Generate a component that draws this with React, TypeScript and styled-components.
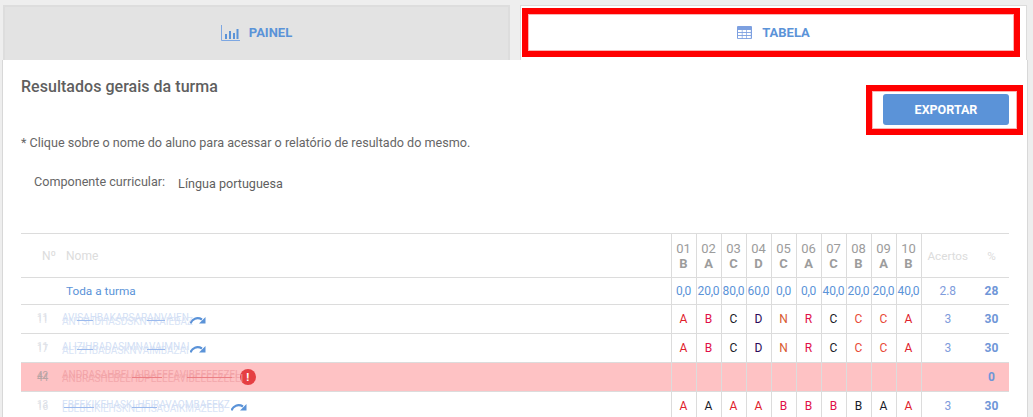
import React from "react";
import styled, { createGlobalStyle } from "styled-components";

const Global = createGlobalStyle`
  html, body { margin: 0; padding: 0; height: 100%; background: #eeeeee; overflow: hidden; }
  body { font-family: Roboto, "Liberation Sans", sans-serif; color: #666; }
  #root { height: 417px; overflow: hidden; }
`;

const BLUE = "#5b93d8";

const Page = styled.div`
  padding: 5px 0 0 2px;
  width: 1028px;
  box-sizing: border-box;
`;
const Tabs = styled.div`
  display: flex;
  gap: 10px;
  padding-left: 1px;
`;
const Tab = styled.div<{ $active?: boolean }>`
  position: relative;
  flex: 0 0 507px;
  height: 55px;
  box-sizing: border-box;
  display: flex;
  align-items: center;
  justify-content: center;
  gap: ${(p) => (p.$active ? "10px" : "9px")};
  padding-bottom: 2px;
  color: ${BLUE};
  font-size: 13px;
  font-weight: 700;
  background: ${(p) => (p.$active ? "#fff" : "#e3e3e3")};
  border: ${(p) => (p.$active ? "1px solid #dcdcdc" : "2px solid #dddddd")};
  border-bottom: none;
`;
const TabHighlight = styled.div`
  position: absolute;
  left: 1px;
  right: 6px;
  top: 2px;
  height: 49px;
  box-sizing: border-box;
  border: 6px solid #ff0000;
  box-shadow: inset 0 0 0 1px #f8b4b4;
`;
const Panel = styled.div`
  background: #fff;
  border-left: 1px solid #d8d8d8;
  border-right: 1px solid #d8d8d8;
  height: 360px;
  box-sizing: border-box;
  padding: 0 4px 0 18px;
  width: 1026px;
`;
const Head = styled.div`
  display: flex;
  justify-content: space-between;
  align-items: flex-start;
  height: 75px;
`;
const Title = styled.h1`
  margin: 18px 0 0;
  font-size: 16px;
  line-height: 18px;
  font-weight: 500;
  letter-spacing: 0.03px;
  color: #5f5f5f;
`;
const ExportFrame = styled.div`
  margin-top: 25px;
  width: 157px;
  height: 50px;
  box-sizing: border-box;
  border: 6px solid #ff0000;
  box-shadow: inset 0 0 0 1px #f8b4b4;
  display: flex;
  padding: 3px 8px 0 11px;
`;
const ExportButton = styled.button`
  width: 126px;
  height: 31px;
  border: none;
  border-radius: 3px;
  background: #5b93d8;
  color: #fff;
  font-family: inherit;
  font-size: 12.5px;
  font-weight: 700;
  padding: 0;
`;
const Note = styled.p`
  margin: 0;
  font-size: 12.6px;
  line-height: 16px;
  color: #666;
`;
const Filter = styled.div`
  display: flex;
  gap: 13px;
  padding: 23px 0 0 13px;
  height: 82px;
  box-sizing: border-box;
  font-size: 12.6px;
  line-height: 16px;
`;
const FilterValue = styled.span`
  padding-top: 2px;
  color: #5f5f5f;
`;
const Table = styled.table`
  width: 988px;
  table-layout: fixed;
  border-collapse: collapse;
  border-top: 1px solid #dcdcdc;
  font-size: 12px;
`;
const HeadRow = styled.tr`
  height: 44px;
  border-bottom: 1px solid #dcdcdc;
`;
const TotalRow = styled.tr`
  height: 27px;
  border-bottom: 1px solid #dcdcdc;
  color: ${BLUE};
`;
const Row = styled.tr<{ $alert?: boolean }>`
  height: 29px;
  border-bottom: 1px solid #dcdcdc;
  background: ${(p) => (p.$alert ? "#fec2c4" : "#fff")};
`;
const NoHead = styled.th`
  padding: 0 6px 0 0;
  text-align: right;
  font-weight: 400;
  color: #dcdcdc;
  font-size: 12px;
`;
const NameHead = styled.th`
  padding: 0 0 0 4px;
  text-align: left;
  font-weight: 400;
  color: #dcdcdc;
`;
const QHead = styled.th`
  padding: 0;
  border-left: 1px solid #dcdcdc;
  text-align: center;
  font-weight: 400;
  color: #9c9c9c;
  font-size: 13px;
  line-height: 15px;
`;
const QKey = styled.b`
  display: block;
  font-weight: 700;
`;
const SummaryHead = styled.th<{ $bordered?: boolean }>`
  padding: 0;
  text-align: center;
  font-weight: 400;
  font-size: 11.7px;
  color: #dcdcdc;
  border-left: ${(p) => (p.$bordered ? "1px solid #dcdcdc" : "none")};
`;
const TotalName = styled.td`
  padding: 0 0 0 4px;
  font-size: 11.8px;
  white-space: nowrap;
`;
const NameCell = styled.td`
  padding: 0;
  white-space: nowrap;
`;
const PlainCell = styled.td`
  padding: 0;
`;
const QCell = styled.td`
  padding: 0;
  border-left: 1px solid #dcdcdc;
  text-align: center;
  color: ${BLUE};
  letter-spacing: -0.2px;
  white-space: nowrap;
`;
const Answer = styled.td<{ $color: string }>`
  padding: 0;
  border-left: 1px solid #dcdcdc;
  text-align: center;
  color: ${(p) => p.$color};
`;
const Hits = styled.td`
  padding: 0;
  text-align: center;
  color: #7f9cdc;
  border-left: 1px solid #dcdcdc;
`;
const Percent = styled.td`
  padding: 0;
  text-align: center;
  color: #6f96d8;
  font-weight: 700;
`;
const Blurred = styled.span<{ $red?: boolean }>`
  position: relative;
  display: inline-block;
  vertical-align: middle;
  font-size: 10px;
  line-height: 8px;
  height: 8px;
  margin-top: -4px;
  color: ${(p) => (p.$red ? "#f2a4a8" : "#d3dff5")};
`;
const BlurredOver = styled.span`
  position: absolute;
  left: 0;
  top: 4px;
  white-space: nowrap;
  opacity: 0.85;
`;
const Strike = styled.span<{ $left: number; $width: number; $red?: boolean }>`
  position: absolute;
  left: ${(p) => p.$left}px;
  width: ${(p) => p.$width}px;
  top: 6px;
  height: 1px;
  background: ${(p) => (p.$red ? "#ec7f84" : "#9cbaed")};
`;
const Smudge = styled.span<{ $dark?: boolean }>`
  position: relative;
  display: block;
  width: 12px;
  margin: -3px 0 0 16px;
  font-size: 10px;
  line-height: 10px;
  color: ${(p) => (p.$dark ? "#b8a4a4" : "#dde1e7")};
`;
const SmudgeOver = styled.span`
  position: absolute;
  left: 0;
  top: 2px;
`;
const RedoIcon = styled.svg`
  display: inline-block;
  vertical-align: middle;
  margin-left: 1px;
`;
const Alert = styled.span`
  display: inline-flex;
  vertical-align: middle;
  align-items: center;
  justify-content: center;
  width: 16px;
  height: 16px;
  border-radius: 50%;
  margin-left: 2px;
  background: #e53e42;
  color: #fff;
  font-size: 11px;
  font-weight: 700;
`;

const ChartIcon = () => (
  <svg width="19" height="16" viewBox="0 0 19 16" fill="none">
    <path d="M.5 0v15.5H19" stroke="#7da7e2" strokeWidth="1" />
    <path d="M4 9h2v5H4zM8 6h2v8H8zM12 8h2v6h-2zM15.5 4h2v10h-2z" fill={BLUE} />
  </svg>
);
const TableIcon = () => (
  <svg width="15" height="13" viewBox="0 0 15 13">
    <rect x="0" y="0" width="15" height="13" rx="1" fill="#7da0e0" />
    {[0, 1, 2, 3].map((r) =>
      [0, 1, 2].map((c) => (
        <rect key={`${r}-${c}`} x={1 + c * 4.5} y={r === 0 ? 1 : 1 + r * 3} width="3.8" height={r === 0 ? 2.4 : 2.1} fill={r === 0 ? "#7da0e0" : "#fff"} />
      ))
    )}
  </svg>
);
const Redo = () => (
  <RedoIcon width="16" height="8" viewBox="0 0 16 8">
    <path d="M0.5 7.5C2 3 7 .5 12 3.5" stroke={BLUE} strokeWidth="2.2" fill="none" />
    <path d="M15.5 1v6.5H9z" fill={BLUE} />
  </RedoIcon>
);

const questions = [
  ["01", "B"], ["02", "A"], ["03", "C"], ["04", "D"], ["05", "C"],
  ["06", "A"], ["07", "C"], ["08", "B"], ["09", "A"], ["10", "B"],
];
const totals = ["0,0", "20,0", "80,0", "60,0", "0,0", "0,0", "40,0", "20,0", "20,0", "40,0"];
const C = {
  red: "#e0202c", crimson: "#e0104a", black: "#1a1a2a", purple: "#2a0a5a",
  warm: "#e84a3a", mag: "#d85a30",
};
type Ans = [string, string];
const row1: Ans[] = [
  ["A", C.red], ["B", C.crimson], ["C", C.black], ["D", C.purple], ["N", C.mag],
  ["R", C.crimson], ["C", C.black], ["C", C.warm], ["C", C.warm], ["A", C.red],
];
const row4: Ans[] = [
  ["A", C.red], ["A", C.black], ["A", C.red], ["A", C.red], ["B", C.crimson],
  ["B", C.crimson], ["B", C.crimson], ["B", C.black], ["A", C.black], ["A", C.red],
];
const students = [
  { a: "11", b: "11", n1: "AVISAHBAKARSARANVAIEN", n2: "ANTSHDHASDSKNVKAIEBAZ", strikes: [[15, 16], [85, 18]], answers: row1, hits: "3", pct: "30" },
  { a: "11", b: "17", n1: "ALIZIHBADASIMNAVAIMNAI", n2: "ALTZHBADASKNVAIMBAZAI", strikes: [[15, 16], [85, 18]], answers: row1, hits: "3", pct: "30" },
  { a: "42", b: "44", n1: "ANDRASAHBELIAIRAEEEAVIBEEEEEZEI", n2: "ANBRASHEBELHDPEEEEAVIBEEEEZEEEI", strikes: [[70, 30], [125, 45]], answers: null, hits: "", pct: "0" },
  { a: "13", b: "16", n1: "EBEEKIKEHASKLHEIRAVAOMBAEEKZ", n2: "LBEBEIKIEHSKNEIHSAOAIKMAZEEB", strikes: [[2, 30], [70, 25]], answers: row4, hits: "3", pct: "30" },
];

export default function App() {
  return (
    <Page>
      <Global />
      <Tabs>
        <Tab>
          <ChartIcon />
          <span>PAINEL</span>
        </Tab>
        <Tab $active>
          <TabHighlight />
          <TableIcon />
          <span>TABELA</span>
        </Tab>
      </Tabs>
      <Panel>
        <Head>
          <Title>Resultados gerais da turma</Title>
          <ExportFrame>
            <ExportButton>EXPORTAR</ExportButton>
          </ExportFrame>
        </Head>
        <Note>* Clique sobre o nome do aluno para acessar o relatório de resultado do mesmo.</Note>
        <Filter>
          <span>Componente curricular:</span>
          <FilterValue>Língua portuguesa</FilterValue>
        </Filter>
        <Table>
          <colgroup>
            <col style={{ width: 41 }} />
            <col style={{ width: 609 }} />
            {questions.map((q) => (
              <col key={q[0]} style={{ width: 25 }} />
            ))}
            <col style={{ width: 53 }} />
            <col style={{ width: 35 }} />
          </colgroup>
          <thead>
            <HeadRow>
              <NoHead>Nº</NoHead>
              <NameHead>Nome</NameHead>
              {questions.map(([n, k]) => (
                <QHead key={n}>
                  {n}
                  <QKey>{k}</QKey>
                </QHead>
              ))}
              <SummaryHead $bordered>Acertos</SummaryHead>
              <SummaryHead>%</SummaryHead>
            </HeadRow>
          </thead>
          <tbody>
            <TotalRow>
              <PlainCell />
              <TotalName>Toda a turma</TotalName>
              {totals.map((t, i) => (
                <QCell key={i}>{t}</QCell>
              ))}
              <Hits>2.8</Hits>
              <Percent>28</Percent>
            </TotalRow>
            {students.map((s, i) => (
              <Row key={i} $alert={!s.answers}>
                <PlainCell>
                  <Smudge $dark={!s.answers}>
                    {s.a}
                    <SmudgeOver>{s.b}</SmudgeOver>
                  </Smudge>
                </PlainCell>
                <NameCell>
                  <Blurred $red={!s.answers}>
                    {s.n1}
                    <BlurredOver>{s.n2}</BlurredOver>
                    {s.strikes.map(([l, w]) => (
                      <Strike key={l} $left={l} $width={w} $red={!s.answers} />
                    ))}
                  </Blurred>
                  {s.answers ? <Redo /> : <Alert>!</Alert>}
                </NameCell>
                {s.answers
                  ? s.answers.map(([l, c], j) => (
                      <Answer key={j} $color={c}>
                        {l}
                      </Answer>
                    ))
                  : questions.map((q) => <Answer key={q[0]} $color="#000" />)}
                <Hits>{s.hits}</Hits>
                <Percent>{s.pct}</Percent>
              </Row>
            ))}
          </tbody>
        </Table>
      </Panel>
    </Page>
  );
}
